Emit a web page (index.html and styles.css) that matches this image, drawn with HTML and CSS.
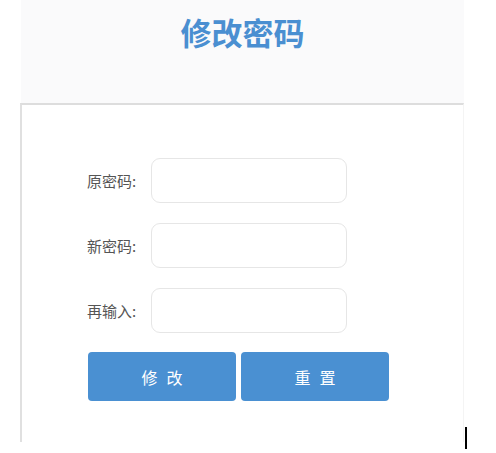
FILE: index.html
```html
<!DOCTYPE html>
<html lang="zh">
<head>
<meta charset="utf-8">
<title>修改密码</title>
<link rel="stylesheet" href="styles.css">
</head>
<body>
<div class="page">
  <div class="header">
    <h1 class="title">修改密码</h1>
  </div>
  <div class="panel">
    <form class="form">
      <div class="row">
        <label class="label">原密码:</label>
        <input class="field" type="password">
      </div>
      <div class="row">
        <label class="label">新密码:</label>
        <input class="field" type="password">
      </div>
      <div class="row">
        <label class="label">再输入:</label>
        <input class="field" type="password">
      </div>
      <div class="actions">
        <button class="btn" type="button">修改</button>
        <button class="btn" type="button">重置</button>
      </div>
    </form>
  </div>
</div>
<div class="caret"></div>
</body>
</html>
```
FILE: styles.css
```css
html, body {
  margin: 0;
  padding: 0;
  background: #ffffff;
  font-family: "Noto Sans CJK SC", "Noto Sans", sans-serif;
}
.page {
  margin-left: 20px;
  width: 444px;
}
.header {
  background: #fafafb;
  height: 103px;
  margin-left: 1px;
  box-sizing: border-box;
  padding-top: 13px;
}
.title {
  margin: 0;
  text-align: center;
  font-size: 31px;
  line-height: 38px;
  font-weight: 700;
  color: #4a8fd1;
}
.panel {
  border-top: 2px solid #dddddd;
  border-left: 2px solid #e0e0e0;
  border-right: 1px solid #f4f4f4;
  height: 339px;
  box-sizing: border-box;
  padding-top: 53px;
  padding-left: 65px;
}
.form {
  display: flex;
  flex-direction: column;
  gap: 20px;
}
.row {
  display: flex;
  align-items: center;
}
.label {
  width: 64px;
  font-size: 15px;
  color: #555555;
}
.field {
  width: 196px;
  height: 45px;
  box-sizing: border-box;
  border: 1px solid #e6e6e6;
  border-radius: 9px;
  background: #ffffff;
  outline: none;
  margin: 0;
  padding: 0 10px;
}
.actions {
  display: flex;
  gap: 5px;
  margin-top: -1px;
  margin-left: 1px;
}
.btn {
  width: 148px;
  height: 49px;
  border: none;
  border-radius: 4px;
  background: #4a90d2;
  color: #ffffff;
  font-family: "Noto Sans CJK SC", sans-serif;
  font-size: 16px;
  letter-spacing: 9px;
  padding: 0 0 0 9px;
  margin: 0;
}
.caret {
  position: absolute;
  left: 465px;
  top: 427px;
  width: 2px;
  height: 22px;
  background: #000000;
}
```
